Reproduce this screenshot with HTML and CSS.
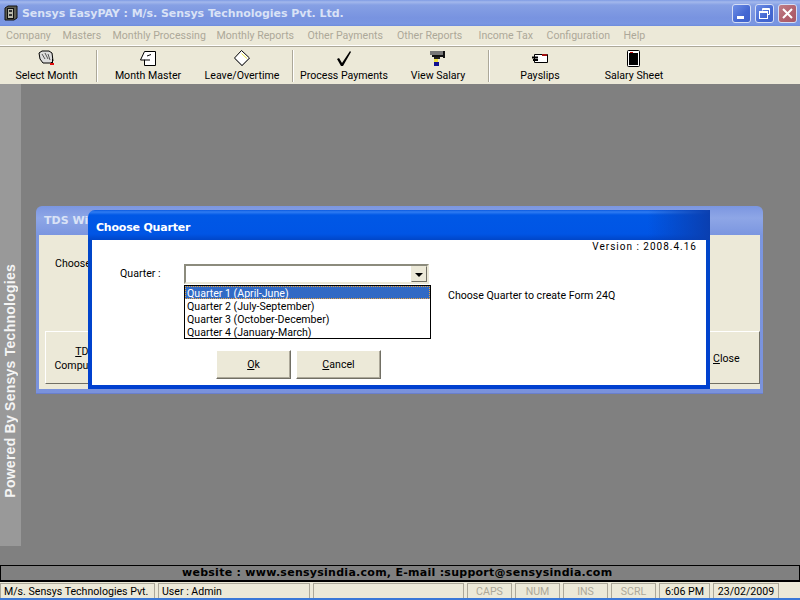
FILE: index.html
```html
<!DOCTYPE html>
<html lang="en">
<head>
    <meta charset="UTF-8">
    <title>Sensys EasyPAY</title>
    <link rel="stylesheet" href="styles.css">
</head>
<body>
    <div class="titlebar">
        <svg class="app-icon" width="14" height="16" viewBox="0 0 14 16">
            <path d="M1 3 L4 1 H13 V13 L10 15 H1 Z" fill="#5c5c50" stroke="#111"/>
            <rect x="3.5" y="3.5" width="6" height="10" fill="#b8b8a8" stroke="#111"/>
            <rect x="5" y="5" width="3" height="2" fill="#333"/>
            <rect x="5" y="9" width="3" height="2" fill="#333"/>
        </svg>
        <span class="title-text">Sensys EasyPAY : M/s. Sensys Technologies Pvt. Ltd.</span>
        <div class="win-buttons">
            <div class="win-btn">
                <svg width="19" height="19" viewBox="0 0 19 19"><rect x="5" y="12" width="7" height="3" fill="#fff"/></svg>
            </div>
            <div class="win-btn">
                <svg width="19" height="19" viewBox="0 0 19 19" fill="none" stroke="#fff"><path d="M7.5 6.5 V4.5 H14.5 V10.5 H12.5"/><path d="M7.5 5.5 H14.5" stroke-width="1"/><rect x="4.5" y="7.5" width="8" height="7"/><path d="M4.5 8.5 H12.5"/></svg>
            </div>
            <div class="win-btn win-close">
                <svg width="19" height="19" viewBox="0 0 19 19" stroke="#fff" stroke-width="2"><path d="M5 5 L14 14 M14 5 L5 14"/></svg>
            </div>
        </div>
    </div>

    <div class="menubar">
        <span class="menu-item">Company</span>
        <span class="menu-item">Masters</span>
        <span class="menu-item">Monthly Processing</span>
        <span class="menu-item">Monthly Reports</span>
        <span class="menu-item">Other Payments</span>
        <span class="menu-item">Other Reports</span>
        <span class="menu-item">Income Tax</span>
        <span class="menu-item">Configuration</span>
        <span class="menu-item">Help</span>
    </div>

    <div class="toolbar">
        <div class="tool tool-first">
            <svg width="18" height="17" viewBox="0 0 18 17">
                <path d="M1 3 L4 1 H11 L14 3 L15 11 L13 13 L5 13 L2 9 Z" fill="#ddd" stroke="#000"/>
                <path d="M4 4 L7 9 M7 3 L10 9 M10 4 L12 10" stroke="#555"/>
                <rect x="12" y="13" width="4" height="2" fill="#e01010"/>
                <rect x="14" y="9" width="1" height="4" fill="#000"/>
            </svg>
            <span>Select Month</span>
        </div>
        <div class="tool-sep"></div>
        <div class="tool">
            <svg width="18" height="17" viewBox="0 0 18 17">
                <path d="M5.5 1.5 H16.5 V15.5 H5.5 V10 H1.5 Z" fill="#fff" stroke="#000"/>
                <path d="M8 6 L12 4.5 M5 10 H11" stroke="#000"/>
            </svg>
            <span>Month Master</span>
        </div>
        <div class="tool">
            <svg width="18" height="17" viewBox="0 0 18 17">
                <path d="M8.5 0.5 L16.5 8 L9 15.5 L1.5 8 Z" fill="#fff" stroke="#000"/>
                <path d="M8.5 3.5 L14 8.5" stroke="#e8e040"/>
                <path d="M2 9 L9 16 L16 9" fill="none" stroke="#555"/>
            </svg>
            <span>Leave/Overtime</span>
        </div>
        <div class="tool-sep"></div>
        <div class="tool">
            <svg width="18" height="17" viewBox="0 0 18 17">
                <path d="M2 9 L4 8 L7 13 L15 1 L16 2 L8 16 H6 Z" fill="#000"/>
            </svg>
            <span>Process Payments</span>
        </div>
        <div class="tool">
            <svg width="18" height="17" viewBox="0 0 18 17">
                <rect x="1" y="1" width="13" height="4" fill="#777"/>
                <rect x="3" y="5" width="11" height="2" fill="#111"/>
                <rect x="14" y="1" width="2" height="7" fill="#111"/>
                <rect x="5" y="7" width="6" height="2" fill="#222"/>
                <rect x="5" y="9" width="4" height="3" fill="#f0e040"/>
                <rect x="5" y="12" width="5" height="4" fill="#101090"/>
            </svg>
            <span>View Salary</span>
        </div>
        <div class="tool-sep"></div>
        <div class="tool">
            <svg width="18" height="17" viewBox="0 0 18 17">
                <path d="M3.5 4.5 H16.5 V12.5 H3.5 Z" fill="#fff" stroke="#000"/>
                <rect x="11" y="4" width="5" height="2" fill="#a01010"/>
                <path d="M1 7.5 H7 M2 10 H7" stroke="#000" stroke-width="2"/>
            </svg>
            <span>Payslips</span>
        </div>
        <div class="tool">
            <svg width="18" height="17" viewBox="0 0 18 17">
                <rect x="2.5" y="0.5" width="12" height="16" rx="1" fill="#fff" stroke="#000"/>
                <rect x="4" y="3" width="9" height="12" fill="#000"/>
                <rect x="5" y="2" width="3" height="1" fill="#c01010"/>
            </svg>
            <span>Salary Sheet</span>
        </div>
    </div>

    <div class="desktop">
        <div class="side-strip"><span>Powered By Sensys Technologies</span></div>

        <div class="back-window">
            <div class="back-title">TDS Wi</div>
            <div class="back-body">
                <div class="back-label">Choose</div>
                <div class="back-buttons">
                    <div class="back-btn back-btn-left"><u>T</u>DS<br>Computation</div>
                    <div class="back-btn back-btn-right"><u>C</u>lose</div>
                </div>
            </div>
        </div>

        <div class="dialog">
            <div class="dialog-title">Choose Quarter</div>
            <div class="dialog-body">
                <div class="version">Version : 2008.4.16</div>
                <div class="quarter-row">
                    <label class="quarter-label">Quarter :</label>
                    <div class="combo-wrap">
                        <div class="combo">
                            <div class="combo-arrow"><i></i></div>
                        </div>
                        <ul class="combo-list">
                            <li class="selected">Quarter 1 (April-June)</li>
                            <li>Quarter 2 (July-September)</li>
                            <li>Quarter 3 (October-December)</li>
                            <li>Quarter 4 (January-March)</li>
                        </ul>
                    </div>
                    <div class="hint">Choose Quarter to create Form 24Q</div>
                </div>
                <div class="dialog-buttons">
                    <div class="btn btn-ok"><u>O</u>k</div>
                    <div class="btn btn-cancel"><u>C</u>ancel</div>
                </div>
            </div>
        </div>
    </div>

    <div class="website-bar">website : www.sensysindia.com, E-mail :support@sensysindia.com</div>

    <div class="statusbar">
        <div class="panel p-company">M/s. Sensys Technologies Pvt.</div>
        <div class="panel p-user">User : Admin</div>
        <div class="panel p-empty"></div>
        <div class="panel p-key off">CAPS</div>
        <div class="panel p-key off">NUM</div>
        <div class="panel p-key off">INS</div>
        <div class="panel p-key off">SCRL</div>
        <div class="panel p-time">6:06 PM</div>
        <div class="panel p-date">23/02/2009</div>
    </div>
    <div class="taskbar-edge"></div>
</body>
</html>
```

FILE: styles.css
```css
* {
    box-sizing: border-box;
}

html, body {
    height: 100%;
}

body {
    display: flex;
    flex-direction: column;
    width: 800px;
    height: 600px;
    margin: 0;
    overflow: hidden;
    font-family: Roboto, 'Liberation Sans', sans-serif;
    font-size: 10.6px;
    color: #000;
    background-color: #808080;
}

/* title bar */
.titlebar {
    display: flex;
    align-items: center;
    flex: 0 0 26px;
    padding: 0 3px 0 4px;
    background: linear-gradient(to bottom, #7f9be3 0, #a3b8ec 2px, #86a0e4 5px, #7893e0 18px, #7a96e2 24px, #6d8bdc 26px);
}

.app-icon {
    margin-right: 4px;
}

.title-text {
    font-family: 'DejaVu Sans', sans-serif;
    font-weight: bold;
    font-size: 11px;
    letter-spacing: -0.05px;
    color: #d9e2f6;
}

.win-buttons {
    display: flex;
    gap: 4px;
    margin-left: auto;
}

.win-btn {
    width: 19px;
    height: 19px;
    border: 1px solid #d5def5;
    border-radius: 3px;
    background: linear-gradient(135deg, #6f8fe6, #4468d2 60%, #3f62cc);
    overflow: hidden;
}

.win-btn svg {
    display: block;
    margin: -1px;
}

.win-close {
    background: linear-gradient(135deg, #c07f88, #b0606c 60%, #a85766);
}

/* menu */
.menubar {
    display: grid;
    grid-template-columns: 56.5px 50px 104px 91px 89.5px 81.5px 68px 77px auto;
    flex: 0 0 20px;
    align-items: center;
    padding-left: 6px;
    padding-bottom: 1px;
    background-color: #ece9d8;
    border-bottom: 1px solid #fff;
    color: #aca899;
}

.menu-item {
    white-space: nowrap;
}

/* toolbar */
.toolbar {
    display: flex;
    flex: 0 0 38px;
    padding-top: 3px;
    background-color: #ece9d8;
    border-top: 1px solid #aca899;
}

.tool {
    display: flex;
    flex-direction: column;
    align-items: center;
    width: 94px;
    height: 33px;
}

.tool-first {
    width: 93px;
}

.tool svg {
    display: block;
    flex: 0 0 17px;
}

.tool span {
    margin-top: 2px;
    white-space: nowrap;
}

.tool-sep {
    width: 2px;
    height: 32px;
    margin: 0 3px;
    border-left: 1px solid #aca899;
    border-right: 1px solid #fff;
}

/* desktop */
.desktop {
    position: relative;
    flex: 1;
    background-color: #808080;
}

.side-strip {
    position: absolute;
    left: 0;
    top: 0;
    width: 21px;
    height: 462px;
    background-color: #999;
}

.side-strip span {
    position: absolute;
    left: 2px;
    top: 180px;
    writing-mode: vertical-rl;
    transform: rotate(180deg);
    font-family: 'Liberation Sans', sans-serif;
    font-weight: bold;
    font-size: 14px;
    letter-spacing: 0.25px;
    color: #f4f4f4;
    white-space: nowrap;
}

/* window behind the dialog */
.back-window {
    position: absolute;
    left: 36px;
    top: 122px;
    width: 727px;
    height: 188px;
    padding: 0 3px 4px;
    border-radius: 6px 6px 0 0;
    background: linear-gradient(to bottom, #7b96e0 0, #8ea6e6 12px, #7b96e0 29px, #7a92dc 100%);
    border-bottom: 1px solid #6a7fcc;
    display: flex;
    flex-direction: column;
}

.back-title {
    flex: 0 0 29px;
    padding: 8px 5px 0;
    font-family: 'DejaVu Sans', sans-serif;
    font-weight: bold;
    font-size: 11px;
    color: #d9e2f6;
}

.back-body {
    position: relative;
    flex: 1;
    display: flex;
    flex-direction: column;
    justify-content: flex-end;
    background-color: #ece9d8;
}

.back-label {
    position: absolute;
    left: 16px;
    top: 22px;
}

.back-buttons {
    display: flex;
    justify-content: space-between;
    padding: 0 0 5px 6px;
}

.back-btn {
    height: 53px;
    padding-top: 13px;
    border: 1px solid;
    border-color: #fff #716f64 #716f64 #fff;
    background-color: #ece9d8;
    line-height: 14px;
    text-align: center;
    white-space: nowrap;
}

.back-btn-left {
    width: 80px;
}

.back-btn-right {
    width: 90px;
    padding-top: 20px;
    padding-left: 42px;
    text-align: left;
}

/* Choose Quarter dialog */
.dialog {
    position: absolute;
    left: 88px;
    top: 126px;
    width: 622px;
    height: 179px;
    padding: 0 4px 4px;
    border-radius: 7px 7px 0 0;
    background: linear-gradient(to bottom, #0a5ae0 0, #2f7cf2 2px, #0058e6 5px, #0055e5 24px, #0046c8 30px, #0040d0 100%);
    display: flex;
    flex-direction: column;
}

.dialog-title {
    flex: 0 0 30px;
    margin: 0 -4px;
    padding-top: 11px;
    padding-left: 8px;
    font-family: 'DejaVu Sans', sans-serif;
    font-weight: bold;
    font-size: 11px;
    letter-spacing: -0.2px;
    color: #fff;
    background: linear-gradient(to right, transparent 90%, #0a3fb0 100%);
}

.dialog-body {
    position: relative;
    flex: 1;
    background-color: #fff;
}

.version {
    position: absolute;
    right: 9px;
    top: 0;
    font-size: 10px;
    letter-spacing: 1px;
    line-height: 13px;
}

.quarter-row {
    display: flex;
    padding: 24px 0 0 28px;
}

.quarter-label {
    width: 64px;
    line-height: 20px;
}

.combo-wrap {
    position: relative;
    width: 247px;
}

.combo {
    position: relative;
    width: 245px;
    height: 20px;
    border: 2px solid;
    border-color: #8c8b7d #ece9d8 #ece9d8 #8c8b7d;
    background-color: #fff;
}

.combo-arrow {
    position: absolute;
    right: 0;
    top: 0;
    width: 16px;
    height: 16px;
    border: 1px solid;
    border-color: #ece9d8 #716f64 #716f64 #ece9d8;
    background-color: #ece9d8;
}

.combo-arrow i {
    position: absolute;
    left: 3px;
    top: 6px;
    border-style: solid;
    border-width: 4px 4px 0;
    border-color: #000 transparent transparent;
}

.combo-list {
    list-style: none;
    width: 247px;
    height: 54px;
    margin: 1px 0 0;
    padding: 0;
    border: 1px solid #000;
    background-color: #fff;
}

.combo-list li {
    height: 13px;
    padding-left: 2px;
    line-height: 15px;
    white-space: nowrap;
}

.combo-list .selected {
    background-color: #316ac5;
    color: #fff;
    outline: 1px dotted #e8a33c;
    outline-offset: -1px;
}

.hint {
    margin-left: 17px;
    padding-top: 25px;
}

.dialog-buttons {
    position: absolute;
    left: 124px;
    top: 110px;
    display: flex;
    gap: 5px;
}

.btn {
    height: 29px;
    border: 1px solid;
    border-color: #fff #716f64 #716f64 #fff;
    box-shadow: inset -1px -1px 0 #aca899;
    background-color: #ece9d8;
    line-height: 27px;
    text-align: center;
}

.btn-ok {
    width: 75px;
}

.btn-cancel {
    width: 85px;
}

/* bottom bars */
.website-bar {
    flex: 0 0 17px;
    border: 1px solid #000;
    border-bottom-width: 2px;
    background-color: #808080;
    padding-left: 181px;
    font-family: 'DejaVu Sans', sans-serif;
    font-weight: bold;
    font-size: 11px;
    letter-spacing: 0.27px;
    line-height: 14px;
    white-space: nowrap;
}

.statusbar {
    display: flex;
    flex: 0 0 16px;
    gap: 3px;
    padding-top: 1px;
    background-color: #ece9d8;
}

.panel {
    height: 15px;
    padding-left: 3px;
    border: 1px solid #aca899;
    border-bottom: none;
    line-height: 16px;
    white-space: nowrap;
    overflow: hidden;
}

.p-company { width: 155px; }
.p-user { width: 152px; }
.p-empty { width: 151px; }
.p-key { width: 45px; padding-left: 0; text-align: center; }
.p-time { width: 51px; padding-left: 0; text-align: center; }
.p-date { width: 66px; padding-left: 0; text-align: center; }

.off {
    color: #aca899;
}

.taskbar-edge {
    flex: 0 0 2px;
    background-color: #3a78d8;
}
```
